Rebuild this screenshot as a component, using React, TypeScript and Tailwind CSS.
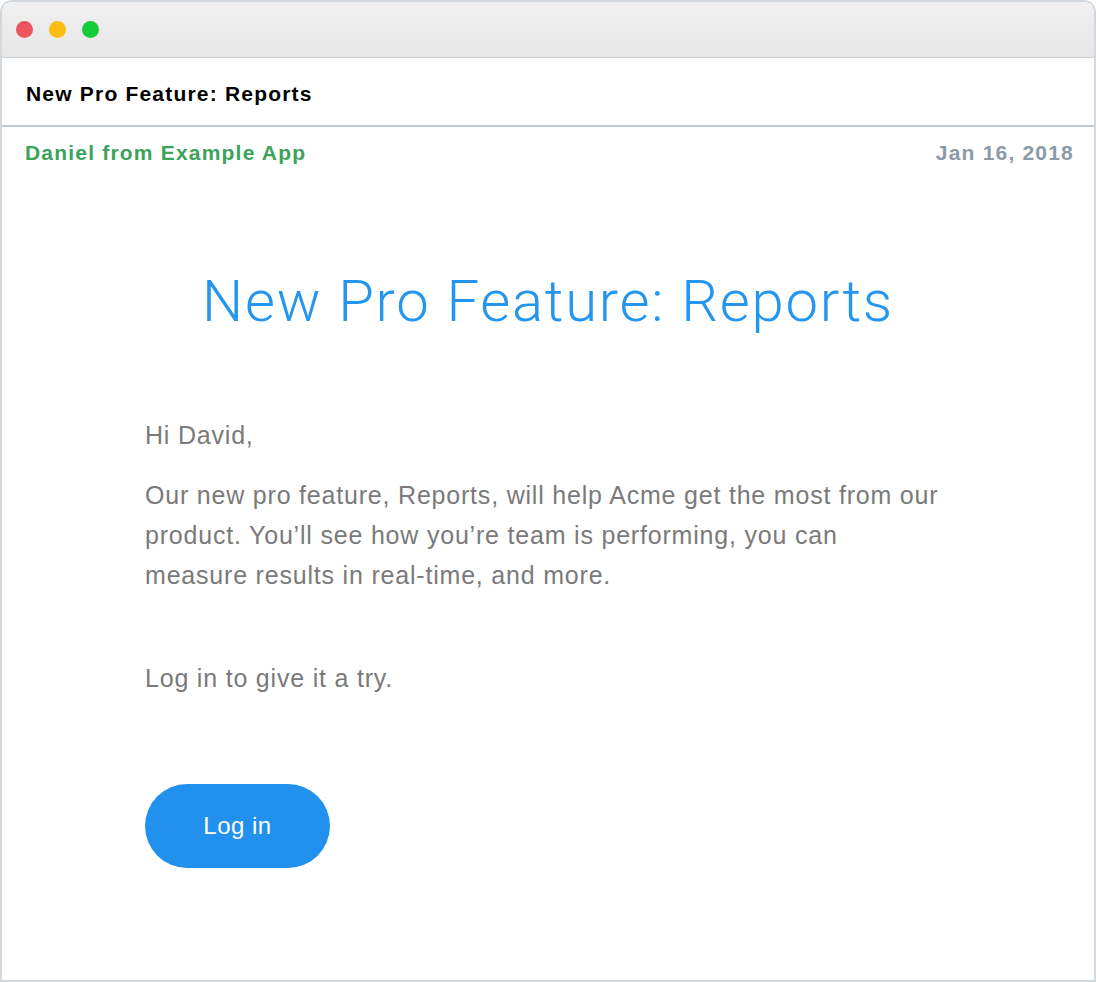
import React from "react";

export default function App() {
  return (
    <div className="w-[1096px] h-[982px] bg-white" style={{ fontFamily: '"Liberation Sans", Arial, sans-serif' }}>
      <div className="w-full h-full border-2 border-[#d3d9de] rounded-t-[12px] overflow-hidden flex flex-col bg-white">
        <div className="h-[56px] shrink-0 bg-gradient-to-b from-[#f0f0f0] to-[#e7e7e7] border-b border-[#c6ced5] flex items-center gap-[16px] pl-[14px]">
          <span className="w-[17px] h-[17px] rounded-full bg-[#ec5560]" />
          <span className="w-[17px] h-[17px] rounded-full bg-[#fdbc11]" />
          <span className="w-[17px] h-[17px] rounded-full bg-[#15cd3b]" />
        </div>
        <div className="h-[69px] shrink-0 flex items-center pl-[24px] pt-[4px] border-b-2 border-[#bfcad3]">
          <span className="text-[21px] font-bold text-black tracking-[1.2px]">New Pro Feature: Reports</span>
        </div>
        <div className="flex justify-between items-center pl-[23px] pr-[20px] pt-[10px]">
          <span className="text-[21px] font-bold text-[#3ba35a] tracking-[1.2px]">Daniel from Example App</span>
          <span className="text-[21px] font-bold text-[#8b9aa8] tracking-[1.2px]">Jan 16, 2018</span>
        </div>
        <div className="flex justify-center pt-[103px]">
          <h1 className="text-[58px] font-light text-[#2496ef] leading-none tracking-[1.75px]" style={{ fontFamily: 'Roboto, "Liberation Sans", sans-serif' }}>
            New Pro Feature: Reports
          </h1>
        </div>
        <div className="pl-[143px] pt-[85px] text-[25px] text-[#7a7a7a] tracking-[0.8px]">
          <p className="leading-[40px]">Hi David,</p>
          <p className="leading-[40px] mt-[20px]">
            Our new pro feature, Reports, will help Acme get the most from our
            <br />
            product. You’ll see how you’re team is performing, you can
            <br />
            measure results in real-time, and more.
          </p>
          <p className="leading-[40px] mt-[63px]">Log in to give it a try.</p>
          <button className="mt-[86px] w-[185px] h-[84px] rounded-full bg-[#2291ee] text-white text-[24px] tracking-[0.5px]">
            Log in
          </button>
        </div>
      </div>
    </div>
  );
}
